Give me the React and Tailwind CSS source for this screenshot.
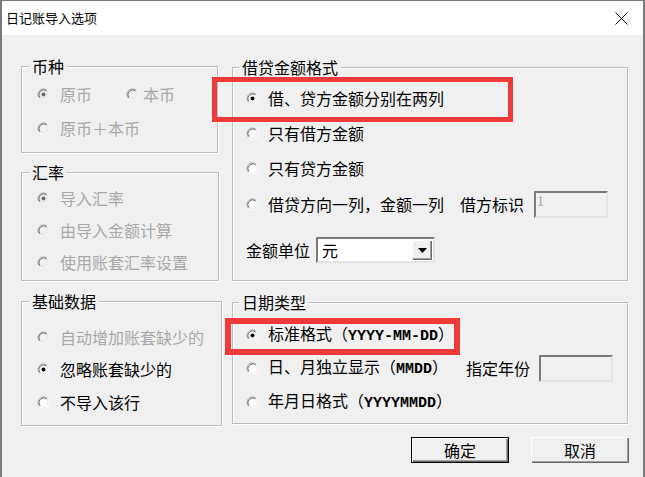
import React from "react"

function Radio({ checked, disabled }) {
  return (
    <svg width="13" height="13" viewBox="0 0 13 13" className="shrink-0">
      <circle cx="6.5" cy="6.5" r="5.5" fill={disabled ? "#f0f0f0" : "#fff"} />
      <path d="M2.61 10.39 A5.5 5.5 0 0 1 10.39 2.61" stroke="#a0a0a0" fill="none" />
      <path d="M10.39 2.61 A5.5 5.5 0 0 1 2.61 10.39" stroke="#fff" fill="none" />
      <path d="M3.32 9.68 A4.5 4.5 0 0 1 9.68 3.32" stroke="#696969" fill="none" />
      <path d="M9.68 3.32 A4.5 4.5 0 0 1 3.32 9.68" stroke="#e3e3e3" fill="none" />
      {checked && <circle cx="6.5" cy="6.5" r="2" fill={disabled ? "#6d6d6d" : "#000"} />}
    </svg>
  )
}

function Row({ checked, disabled, className = "", gap = "gap-[9px]", children }) {
  return (
    <div className={`flex items-center h-[20px] ${gap} ${className}`}>
      <Radio checked={checked} disabled={disabled} />
      <span className={disabled ? "text-[#a8a8a8] whitespace-nowrap" : "text-black whitespace-nowrap"}>{children}</span>
    </div>
  )
}

function Group({ title, legend = "left-[7px]", className = "", children }) {
  return (
    <div className={`relative border border-[#bcbcbc] shadow-[inset_1px_1px_0_#fff,1px_1px_0_#fff] ${className}`}>
      <span className={`absolute -top-[11px] ${legend} px-[3px] bg-[#f0f0f0] leading-[20px] text-black`}>{title}</span>
      {children}
    </div>
  )
}

function Mono({ children }) {
  return <span className="font-['Liberation_Mono',monospace] font-bold text-[15px]">{children}</span>
}

export default function App() {
  return (
    <div className="relative w-[645px] h-[477px] bg-[#f0f0f0] border-x-2 border-t border-[#7a7a7a] overflow-hidden font-['Noto_Sans_CJK_SC',sans-serif] text-[16px] leading-[20px]">
      {/* title bar */}
      <div className="h-[34px] bg-white flex items-center justify-between pl-[4px] pr-[15px]">
        <span className="text-[13px] text-black">日记账导入选项</span>
        <svg width="13" height="13" viewBox="0 0 13 13">
          <path d="M0.5 0.5 L12.5 12.5 M12.5 0.5 L0.5 12.5" stroke="#000" strokeWidth="1" />
        </svg>
      </div>

      <div className="flex pl-[19px] pt-[31px] gap-[10px]">
        {/* left column */}
        <div className="flex flex-col w-[201px]">
          <Group title="币种" legend="left-[7px]" className="w-[197px] h-[87px] pt-[17px] pl-[15px]">
            <div className="flex items-center h-[20px]">
              <Row checked disabled gap="gap-[10px]">原币</Row>
              <Row disabled gap="gap-[4px]" className="ml-[34px]">本币</Row>
            </div>
            <Row disabled gap="gap-[10px]" className="mt-[14px]">原币＋本币</Row>
          </Group>

          <Group title="汇率" legend="left-[7px]" className="w-[198px] h-[109px] mt-[19px] pt-[15px] pl-[15px]">
            <Row checked disabled gap="gap-[10px]">导入汇率</Row>
            <Row disabled gap="gap-[10px]" className="mt-[12px]">由导入金额计算</Row>
            <Row disabled gap="gap-[10px]" className="mt-[12px]">使用账套汇率设置</Row>
          </Group>

          <Group title="基础数据" legend="left-[7px]" className="w-[201px] h-[125px] mt-[20px] pt-[25px] pl-[15px]">
            <Row disabled gap="gap-[10px]">自动增加账套缺少的</Row>
            <Row checked gap="gap-[10px]" className="mt-[12px]">忽略账套缺少的</Row>
            <Row gap="gap-[10px]" className="mt-[13px]">不导入该行</Row>
          </Group>
        </div>

        {/* right column */}
        <div className="flex flex-col w-[396px] mt-[1px]">
          <Group title="借贷金额格式" legend="left-[6px]" className="h-[214px] pt-[20px] pl-[13px]">
            <Row checked>借、贷方金额分别在两列</Row>
            <Row className="mt-[15px]">只有借方金额</Row>
            <Row className="mt-[15px]">只有贷方金额</Row>
            <div className="flex items-center h-[20px] mt-[16px]">
              <Row>借贷方向一列，金额一列</Row>
              <span className="ml-[16px] text-black whitespace-nowrap">借方标识</span>
              <div className="ml-[10px] w-[74px] h-[27px] shrink-0 bg-[#f0f0f0] border-2 border-t-[#7a7a7a] border-l-[#7a7a7a] border-r-[#e3e3e3] border-b-[#e3e3e3] pl-[1px] flex items-start">
                <span className="font-['Liberation_Serif',serif] text-[14px] leading-[18px] text-[#a0a0a0]">1</span>
              </div>
            </div>
            <div className="flex items-center h-[20px] mt-[26px]">
              <span className="text-black whitespace-nowrap">金额单位</span>
              <div className="ml-[6px] w-[119px] h-[26px] shrink-0 bg-white border-2 border-t-[#7a7a7a] border-l-[#7a7a7a] border-r-[#e3e3e3] border-b-[#e3e3e3] flex items-center justify-between">
                <span className="pl-[4px] text-black">元</span>
                <div className="w-[20px] h-[20px] mr-[1px] bg-[#f0f0f0] shadow-[inset_1px_1px_0_#fff,inset_-1px_-1px_0_#696969,inset_-2px_-2px_0_#a0a0a0] flex items-center justify-center">
                  <svg width="9" height="5" viewBox="0 0 9 5">
                    <path d="M0 0 L9 0 L4.5 5 Z" fill="#000" />
                  </svg>
                </div>
              </div>
            </div>
          </Group>

          <Group title="日期类型" legend="left-[6px]" className="h-[122px] mt-[21px] pt-[22px] pl-[13px]">
            <Row checked>标准格式（<Mono>YYYY-MM-DD</Mono>）</Row>
            <div className="flex items-center h-[20px] mt-[13px]">
              <Row>日、月独立显示（<Mono>MMDD</Mono>）</Row>
              <span className="ml-[18px] text-black whitespace-nowrap">指定年份</span>
              <div className="ml-[9px] w-[74px] h-[27px] shrink-0 bg-[#f0f0f0] border-2 border-t-[#7a7a7a] border-l-[#7a7a7a] border-r-[#e3e3e3] border-b-[#e3e3e3]" />
            </div>
            <Row className="mt-[14px]">年月日格式（<Mono>YYYYMMDD</Mono>）</Row>
          </Group>

          <div className="flex justify-end gap-[22px] mt-[13px] -mr-[1px]">
            <button className="w-[98px] h-[26px] border border-black bg-[#f0f0f0] shadow-[inset_1px_1px_0_#fff,inset_-1px_-1px_0_#696969,inset_-2px_-2px_0_#a0a0a0] text-black text-[16px] leading-[20px]">
              确定
            </button>
            <button className="w-[98px] h-[26px] bg-[#f0f0f0] shadow-[inset_1px_1px_0_#fff,inset_-1px_-1px_0_#696969,inset_-2px_-2px_0_#a0a0a0] text-black text-[16px] leading-[20px]">
              取消
            </button>
          </div>
        </div>
      </div>

      {/* annotation boxes */}
      <div className="absolute left-[210px] top-[76px] w-[301px] h-[45px] border-[5px] border-[#f03a3a]" />
      <div className="absolute left-[223px] top-[317px] w-[235px] h-[37px] border-[6px] border-[#f03a3a]" />
    </div>
  )
}
